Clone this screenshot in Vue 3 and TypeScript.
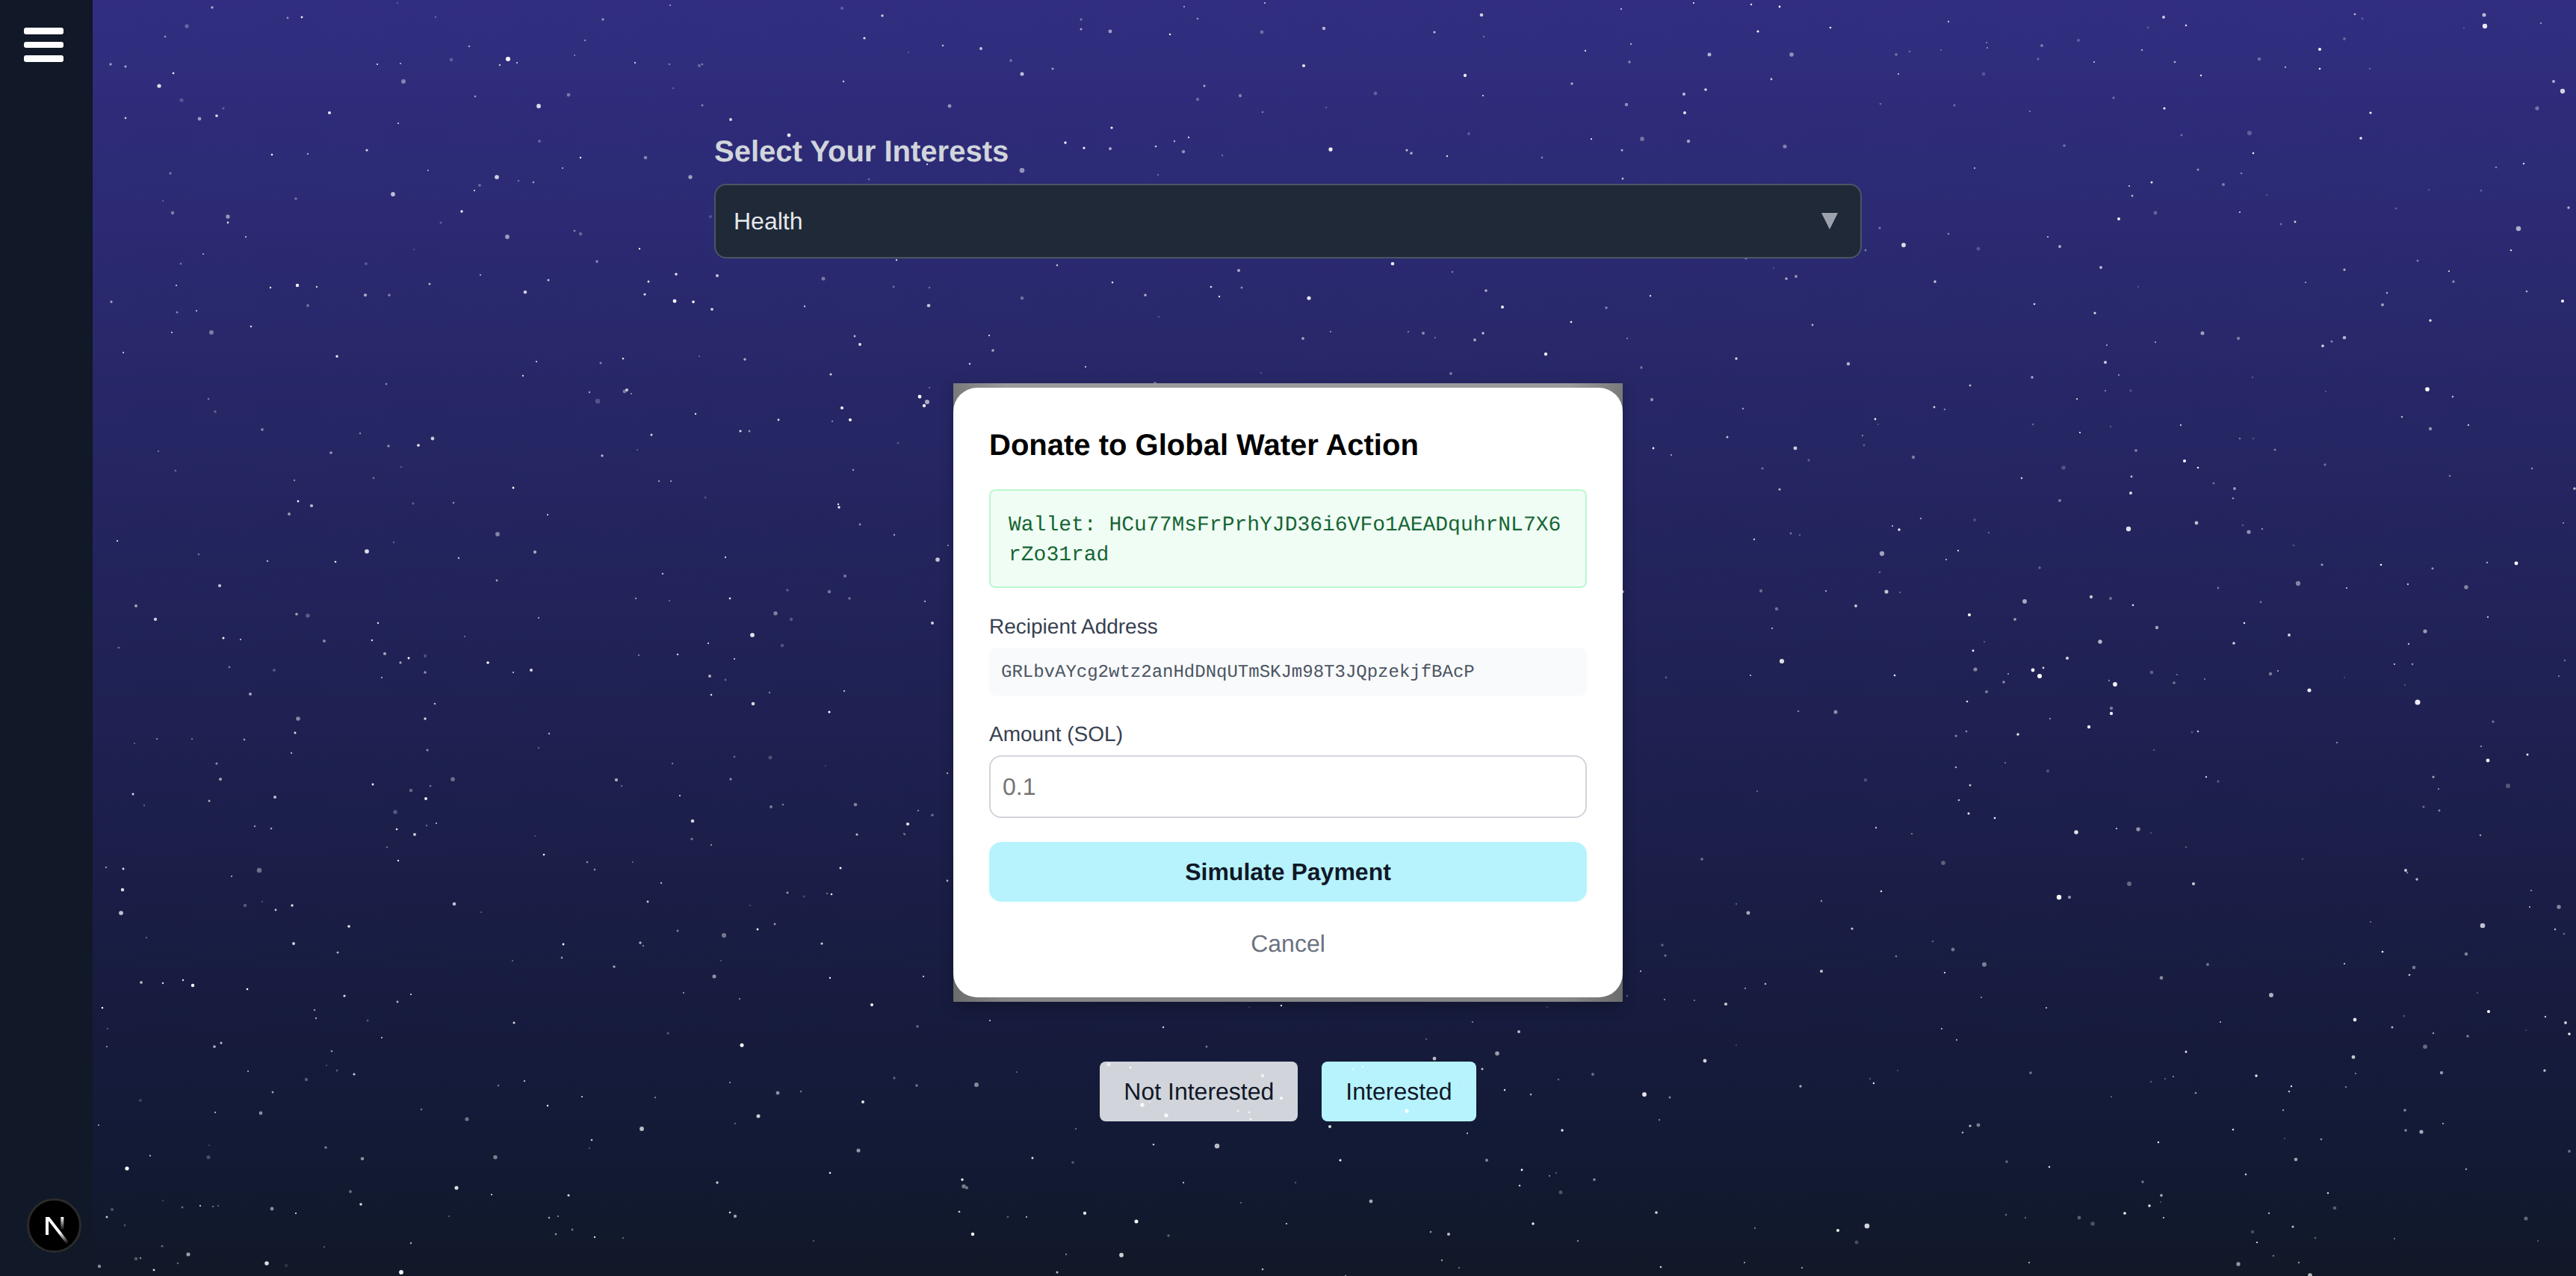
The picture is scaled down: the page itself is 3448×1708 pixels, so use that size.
<script setup lang="ts">
import { ref } from 'vue'

interface Star {
  x: number
  y: number
  r: number
  o: number
}

const amount = ref('')

// seeded so the sky stays the same between runs
const makeStars = (count: number): Star[] => {
  let seed = 48213
  const rand = () => {
    seed = (seed + 0x6d2b79f5) | 0
    let t = Math.imul(seed ^ (seed >>> 15), 1 | seed)
    t = (t + Math.imul(t ^ (t >>> 7), 61 | t)) ^ t
    return ((t ^ (t >>> 14)) >>> 0) / 4294967296
  }
  const list: Star[] = []
  for (let i = 0; i < count; i++) {
    list.push({
      x: Math.round(124 + rand() * 3324),
      y: Math.round(rand() * 1708),
      r: 1 + rand() * rand() * 2.6,
      o: 0.2 + rand() * 0.8,
    })
  }
  return list
}

// a few stars read off the reference
const placed: Star[] = [
  { x: 2644, y: 896, r: 2.6, o: 0.45 },
  { x: 2721, y: 897, r: 2.4, o: 1 },
  { x: 2735, y: 894, r: 1.4, o: 0.8 },
  { x: 2730, y: 905, r: 3, o: 1 },
  { x: 2887, y: 840, r: 2.2, o: 0.6 },
  { x: 2880, y: 900, r: 2.2, o: 0.3 },
  { x: 2826, y: 948, r: 2.2, o: 0.4 },
  { x: 2826, y: 955, r: 2.2, o: 0.9 },
  { x: 2796, y: 973, r: 2.2, o: 0.9 },
  { x: 1484, y: 1425, r: 2.4, o: 0.6 },
  { x: 1513, y: 1429, r: 1.6, o: 0.8 },
  { x: 1690, y: 1440, r: 2.4, o: 0.6 },
  { x: 1561, y: 1493, r: 2.6, o: 0.9 },
  { x: 1674, y: 1498, r: 1.4, o: 0.8 },
  { x: 1883, y: 1487, r: 2.6, o: 1 },
  { x: 1780, y: 1508, r: 2, o: 0.85 },
  { x: 1920, y: 1417, r: 2.4, o: 0.7 },
  { x: 148, y: 86, r: 1.8, o: 0.5 },
  { x: 168, y: 89, r: 1.6, o: 0.6 },
  { x: 213, y: 115, r: 2.6, o: 0.85 },
  { x: 243, y: 134, r: 2.6, o: 0.2 },
  { x: 284, y: 10, r: 1.7, o: 0.6 },
  { x: 170, y: 1564, r: 2.6, o: 1 },
  { x: 287, y: 1401, r: 1.8, o: 0.7 },
  { x: 365, y: 1462, r: 1.4, o: 0.6 },
  { x: 349, y: 1490, r: 2.4, o: 0.5 },
  { x: 364, y: 1618, r: 2.4, o: 0.5 },
  { x: 167, y: 1640, r: 1.5, o: 0.25 },
  { x: 217, y: 1668, r: 1.6, o: 0.35 },
  { x: 238, y: 1691, r: 1.3, o: 0.35 },
  { x: 133, y: 1695, r: 2.2, o: 0.5 },
  { x: 383, y: 1694, r: 2.2, o: 0.12 },
]

const stars = [...makeStars(1150), ...placed]
</script>

<template>
  <div class="page">
    <aside class="sidebar">
      <button class="burger" aria-label="Menu">
        <span></span>
        <span></span>
        <span></span>
      </button>
    </aside>

    <svg class="sky" width="3448" height="1708" viewBox="0 0 3448 1708" aria-hidden="true">
      <circle
        v-for="(s, i) in stars"
        :key="i"
        :cx="s.x"
        :cy="s.y"
        :r="s.r"
        :opacity="s.o"
        fill="#fff"
      />
    </svg>

    <main class="content">
      <section class="picker">
        <label class="picker-label">Select Your Interests</label>
        <div class="select">
          <span>Health</span>
          <svg class="caret" width="22" height="22" viewBox="0 0 22 22">
            <polygon points="0,0 22,0 11,22" fill="#9ca3af" />
          </svg>
        </div>
      </section>

      <div class="modal-shell">
        <div class="modal">
          <h2 class="modal-title">Donate to Global Water Action</h2>
          <div class="wallet">Wallet: HCu77MsFrPrhYJD36i6VFo1AEADquhrNL7X6rZo31rad</div>

          <label class="field-label">Recipient Address</label>
          <div class="recipient">GRLbvAYcg2wtz2anHdDNqUTmSKJm98T3JQpzekjfBAcP</div>

          <label class="field-label">Amount (SOL)</label>
          <input v-model="amount" class="amount" type="text" placeholder="0.1" />

          <button class="pay">Simulate Payment</button>
          <button class="cancel">Cancel</button>
        </div>
      </div>

      <div class="choices">
        <button class="choice no">Not Interested</button>
        <button class="choice yes">Interested</button>
      </div>
    </main>

    <div class="next-badge">
      <svg width="60" height="60" viewBox="0 0 180 180" fill="none">
        <defs>
          <linearGradient id="nextA" x1="109" y1="116.5" x2="144.5" y2="160.5" gradientUnits="userSpaceOnUse">
            <stop stop-color="#fff" />
            <stop offset="1" stop-color="#fff" stop-opacity="0" />
          </linearGradient>
          <linearGradient id="nextB" x1="121" y1="54" x2="120.8" y2="106.9" gradientUnits="userSpaceOnUse">
            <stop stop-color="#fff" />
            <stop offset="1" stop-color="#fff" stop-opacity="0" />
          </linearGradient>
        </defs>
        <path
          d="M149.508 157.52L69.142 54H54V125.97H66.1136V69.3836L139.999 164.845C143.333 162.614 146.509 160.165 149.508 157.52Z"
          fill="url(#nextA)"
        />
        <rect x="115" y="54" width="12" height="72" fill="url(#nextB)" />
      </svg>
    </div>
  </div>
</template>

<style>
html,
body {
  margin: 0;
  background: #111827;
}
</style>

<style scoped>
.page {
  position: relative;
  width: 3448px;
  height: 1708px;
  overflow: hidden;
  background: linear-gradient(180deg, #312e81 0%, #161b3c 82%, #121a34 91%, #111827 100%);
  font-family: 'Liberation Sans', Arial, sans-serif;
  text-rendering: geometricPrecision;
}
.page button,
.page input {
  text-rendering: geometricPrecision;
}
.sidebar {
  position: absolute;
  top: 0;
  left: 0;
  bottom: 0;
  z-index: 3;
  width: 124px;
  padding: 37px 0 0 32px;
  box-sizing: border-box;
  background: #111827;
}
.burger {
  display: flex;
  flex-direction: column;
  gap: 10px;
  padding: 0;
  border: 0;
  background: none;
}
.burger span {
  display: block;
  width: 53px;
  height: 8.5px;
  border-radius: 3px;
  background: #fff;
}
.sky {
  position: absolute;
  inset: 0;
  z-index: 1;
  pointer-events: none;
}
.content {
  display: flex;
  flex-direction: column;
  align-items: center;
  padding-top: 175px;
}
.picker {
  position: relative;
  width: 1536px;
}
.picker-label {
  position: relative;
  display: block;
  margin-bottom: 15px;
  font-size: 40px;
  line-height: 56px;
  font-weight: 700;
  color: #d1d5db;
}
.select {
  position: relative;
  z-index: 2;
  display: flex;
  align-items: center;
  justify-content: space-between;
  height: 100px;
  padding: 0 30px 0 24px;
  box-sizing: border-box;
  border: 2px solid #4b5563;
  border-radius: 16px;
  background: #1f2937;
  color: #e5e7eb;
  font-size: 32px;
}
.modal-shell {
  position: relative;
  z-index: 2;
  width: 896px;
  margin-top: 167px;
  padding: 6px 0;
  box-sizing: border-box;
  background:
    linear-gradient(90deg, #7a7a7a, #9b9b9b 70px, #9b9b9b calc(100% - 70px), #7a7a7a) top / 100% 50% no-repeat,
    linear-gradient(90deg, #6c6c6c, #868686 70px, #868686 calc(100% - 70px), #6c6c6c) bottom / 100% 50% no-repeat;
  box-shadow: 0 6px 16px rgba(0, 0, 0, 0.25);
}
.modal {
  display: flex;
  flex-direction: column;
  padding: 49px 48px 32px;
  border-radius: 32px;
  background: #fff;
}
.modal-title {
  margin: 0 0 31px;
  font-size: 40px;
  line-height: 56px;
  font-weight: 700;
  color: #000;
}
.wallet {
  margin-bottom: 32px;
  padding: 27px 24px 21px;
  border: 2px solid #bbf7d0;
  border-radius: 8px;
  background: #f0fdf4;
  color: #166534;
  font-family: 'Liberation Mono', 'Courier New', monospace;
  font-size: 28px;
  line-height: 40px;
  word-break: break-all;
}
.field-label {
  margin-bottom: 8px;
  font-size: 28px;
  line-height: 40px;
  color: #374151;
}
.recipient {
  margin-bottom: 32px;
  padding: 18px 16px 14px;
  border-radius: 8px;
  background: #f9fafb;
  color: #4b5563;
  font-family: 'Liberation Mono', 'Courier New', monospace;
  font-size: 24px;
  line-height: 32px;
}
.amount {
  height: 84px;
  margin-bottom: 32px;
  padding: 0 16px;
  box-sizing: border-box;
  border: 2px solid #d1d5db;
  border-radius: 16px;
  outline: none;
  background: #fff;
  color: #111827;
  font-family: inherit;
  font-size: 32px;
}
.amount::placeholder {
  color: #757575;
  opacity: 1;
}
.pay {
  height: 80px;
  margin-bottom: 16px;
  border: 0;
  border-radius: 16px;
  background: #b6f3fd;
  color: #111827;
  font-family: inherit;
  font-size: 32px;
  font-weight: 700;
}
.cancel {
  height: 80px;
  border: 0;
  background: none;
  color: #6b7280;
  font-family: inherit;
  font-size: 32px;
}
.choices {
  display: flex;
  gap: 32px;
  margin-top: 80px;
}
.choice {
  height: 80px;
  padding: 0 32px;
  border: 0;
  border-radius: 8px;
  color: #111827;
  font-family: inherit;
  font-size: 32px;
}
.choice.no {
  background: #d1d5db;
}
.choice.yes {
  background: #b6f3fd;
}
.next-badge {
  position: absolute;
  left: 36px;
  bottom: 31px;
  z-index: 4;
  display: flex;
  align-items: center;
  justify-content: center;
  width: 73px;
  height: 73px;
  box-sizing: border-box;
  border: 3px solid #2b2b2b;
  border-radius: 50%;
  background: #000;
}
</style>
